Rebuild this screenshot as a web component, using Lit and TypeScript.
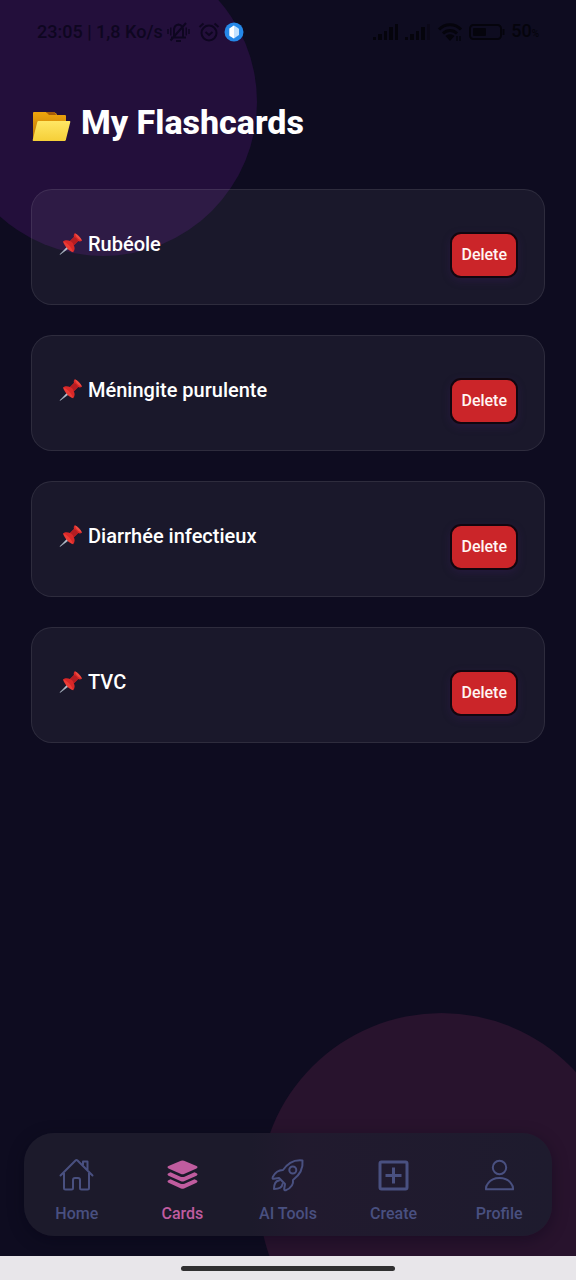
import { LitElement, html, css, svg } from "lit";
import { customElement, property, state } from "lit/decorators.js";
import { classMap } from "lit/directives/class-map.js";

const font = css`"Roboto", "Noto Sans", sans-serif`;

@customElement("status-bar")
class StatusBar extends LitElement {
  static styles = css`
    :host { display: flex; justify-content: space-between; align-items: center; height: 64px; padding: 0 37px; box-sizing: border-box; color: #0e0620; font: 500 18px/24px ${font}; }
    .group { display: flex; align-items: center; gap: 4px; }
    .right { color: #05040c; gap: 6px; }
    .small { font-size: 10px; }
    svg { display: block; fill: none; stroke: currentColor; stroke-width: 2; }
    .wide { margin-right: 4px; }
  `;

  private bars(last: number) {
    return svg`<g stroke="none" fill="currentColor">
      <rect x="0" y="14" width="3" height="3"/><rect x="5" y="11" width="4" height="6"/>
      <rect x="11" y="8" width="3" height="9"/><rect x="16" y="4" width="4" height="13"/>
      <rect x="22" y="1" width="3" height="16" opacity=${last}/></g>`;
  }

  render() {
    return html`
      <div class="group">
        <span>23:05 | 1,8 Ko/s</span>
        <svg class="wide" width="23" height="22" viewBox="0 0 23 22">
          <path d="M4 16.500h15M7 16V9.500q0-5.500 4.500-6 4.500.5 4.500 6V16M9 20h5M3.500 19.500 19 2" /><path d="M1 8v5M22 8v5M3.800 6.500v8M19.200 6.500v8" stroke-width="1.400" />
        </svg>
        <svg width="22" height="22" viewBox="0 0 22 22">
          <circle cx="11" cy="12" r="7.500" /><path d="m1.500 6 4-3.500M20.500 6l-4-3.500M7.500 11l3.500 3 3.500-3" />
        </svg>
        <svg width="20" height="20" viewBox="4 0 20 20">
          <circle cx="14" cy="10" r="9.500" fill="#2588e8" stroke="none" />
          <path d="m14 3.500 4 2.500 1 1v6l-3 2-2 1.500L9.500 14V6.500z" fill="#c3e2ff" stroke="none" />
          <path d="M14 3.500v13L9.500 13.500v-7z" fill="#fff" stroke="none" />
        </svg>
      </div>
      <div class="group right">
        <svg width="26" height="18" viewBox="0 0 26 18">${this.bars(1)}</svg>
        <svg width="26" height="18" viewBox="0 0 26 18">${this.bars(0.35)}</svg>
        <svg width="26" height="20" viewBox="0 0 26 20">
          <path stroke-width="3" d="M2 7.500c6-6.500 16-6.500 22 0M6 11.500c4-4 10-4 14 0" /><path d="m8.500 14 4.500 5 4.500-5c-2.500-2.500-6.500-2.500-9 0z" fill="currentColor" stroke="none" /><path d="M20 19v-5M23 14v5" stroke-width="1.500" />
        </svg>
        <svg width="36" height="18" viewBox="0 0 36 18">
          <rect x="1" y="2" width="31" height="14" rx="3.500" /><rect x="4" y="5" width="13" height="8" rx="1" fill="currentColor" stroke="none" /><path d="M34.500 6v6" />
        </svg>
        <span>50<span class="small">%</span></span>
      </div>
    `;
  }
}

@customElement("deck-card")
class DeckCard extends LitElement {
  @property() name = "";

  static styles = css`
    :host { display: flex; align-items: flex-start; justify-content: space-between; box-sizing: border-box; padding: 42px 26px 26px 27px; border: 1px solid rgba(255, 255, 255, 0.09); border-radius: 21px; background: rgba(255, 255, 255, 0.05); font-family: ${font}; }
    .name { display: flex; align-items: center; gap: 5px; margin: 0; color: #fff; font-size: 20px; font-weight: 500; line-height: 24px; }
    .delete { box-sizing: border-box; height: 46px; padding: 0 9px; border: 2px solid #12060f; border-radius: 11px; background: #cb2529; color: #fff5f3; font: 500 16px/24px ${font}; cursor: pointer; box-shadow: 0 3px 8px rgba(70, 30, 110, 0.25); }
    svg { display: block; }
  `;

  render() {
    return html`
      <h2 class="name">
        <svg width="24" height="24" viewBox="0 0 24 24" aria-hidden="true">
          <path d="M1 22.500 9 14l1.500 1.500z" fill="#b9c3cf" stroke="#aab5c2" stroke-width=".6" />
          <path d="M4 9.500c2-2 5-1.500 7-.5l4-4c-.5-1.500-.3-3 .8-3.800L23 8.500c-1 1.200-2.500 1.200-4 .6l-4.200 4.200c1.200 2.200 1.200 5-.6 7z" fill="#d92828" />
          <path d="M15 5c2 .5 4 2.500 4.200 4.200l-4.400 4.300C14.500 11.500 13 9.500 11 9z" fill="#b51d22" />
          <path d="M15.800 1.200C18.500 2.200 21.500 5 23 8.500c-2.800-.3-6.500-4-7.200-7.300z" fill="#ef4a40" />
          <path d="M4 9.500c4 1 8.500 5.500 10.200 10.800C10 19 5.500 14.500 4 9.500z" fill="#ec3b35" />
        </svg>
        <span>${this.name}</span>
      </h2>
      <button class="delete" type="button" @click=${() => this.dispatchEvent(new CustomEvent("remove"))}>Delete</button>
    `;
  }
}

const icons: Record<string, unknown> = {
  Home: svg`<path d="M5 15v15q0 1.500 1.500 1.500h6q1.500 0 1.500-1.500v-8q0-2 2-2h3q2 0 2 2v8q0 1.500 1.500 1.500h6q1.500 0 1.500-1.500V15M1.500 17.500 16.500 2.500q1-1 2 0l15 15M24 7V3.500h4.500v9"/>`,
  Cards: svg`<g fill="currentColor" stroke="none"><path d="M16 2.800q1.500-.6 3 0L31.500 8q2 1.200 0 2.500L19 16q-1.500.6-3 0L3.500 10.500q-2-1.300 0-2.500z"/><path d="m5.500 14.300 10 4.400q2 .8 4 0l10-4.400 2 1q2 1.200 0 2.500L19 23.300q-1.500.6-3 0L3.500 17.800q-2-1.300 0-2.500z"/><path d="m5.500 21.300 10 4.400q2 .8 4 0l10-4.400 2 1q2 1.200 0 2.500L19 30.500q-1.500.6-3 0L3.500 24.800q-2-1.300 0-2.500z"/></g>`,
  "AI Tools": svg`<path d="M32.500 2.500C22 1.500 17 6.500 13 12 8.500 12 5 14.500 2.800 19q-.8 2 1 1.800L9 20l6 6-.8 5q0 1.800 1.800 1.200 8-3.700 7-10.200C29 17.500 33.500 12 32.500 2.500z"/><circle cx="22.800" cy="12" r="3.500"/><path d="M9 22.500C5 23 4 26 4 31c5 0 8-1 8.500-5"/>`,
  Create: svg`<rect x="4" y="4" width="27" height="27" rx="1.500" stroke-width="3"/><path stroke-width="3" stroke-linecap="butt" d="M17.500 9.500v16M9.500 17.500h16"/>`,
  Profile: svg`<circle cx="17.500" cy="9.500" r="6.700"/><path d="M4 31.300h27q.3-3.300-2-6c-5-7-18-7-23 0q-2.300 2.700-2 6z"/>`,
};

@customElement("tab-bar")
class TabBar extends LitElement {
  @state() private active = "Cards";

  static styles = css`
    :host { display: block; font-family: ${font}; }
    .bar { display: grid; grid-template-columns: repeat(5, 1fr); padding: 25px 0 9px; border-radius: 30px; background: linear-gradient(90deg, #1c1a2b 43%, #211a2e 52%, #1e1b2e); box-shadow: 0 4px 16px rgba(5, 4, 20, 0.35); }
    .tab { display: flex; flex-direction: column; align-items: center; gap: 8px; color: #495080; font-size: 16px; font-weight: 500; line-height: 26px; text-decoration: none; }
    .active { color: #c05c9f; }
    svg { display: block; fill: none; stroke: currentColor; stroke-width: 2; stroke-linecap: round; stroke-linejoin: round; }
  `;

  render() {
    return html`<nav class="bar">
      ${Object.keys(icons).map(
        (name) => html`<a href="#" class=${classMap({ tab: true, active: name === this.active })}
          @click=${(e: Event) => { e.preventDefault(); this.active = name; }}>
          <svg width="35" height="35" viewBox="0 0 35 35" aria-hidden="true">${icons[name]}</svg>
          <span>${name}</span>
        </a>`
      )}
    </nav>`;
  }
}

@customElement("app-root")
class AppRoot extends LitElement {
  @state() private decks = ["Rubéole", "Méningite purulente", "Diarrhée infectieux", "TVC"];

  static styles = css`
    :host { display: block; font-family: ${font}; }
    .page { position: relative; z-index: 0; overflow: hidden; display: flex; flex-direction: column; min-height: 100vh; background: #0e0c20; }
    .orb { position: absolute; z-index: -1; border-radius: 50%; }
    .violet { top: -52px; left: -51px; width: 308px; height: 308px; background: #230f3b; }
    .pink { right: -48px; bottom: -98px; width: 365px; height: 365px; background: #28132d; }
    .main { flex: 1; padding: 34px 31px; }
    .title { display: flex; align-items: center; gap: 10px; margin: 0 0 43px; color: #fff; font-size: 34px; font-weight: 800; line-height: 48px; }
    .list { display: flex; flex-direction: column; gap: 30px; }
    .tabs { margin: 0 24px 20px; }
    .system { display: flex; align-items: center; justify-content: center; height: 24px; background: #e8e6ea; }
    .handle { width: 37%; height: 5px; border-radius: 3px; background: #303031; }
    svg { display: block; }
  `;

  render() {
    return html`<div class="page">
      <div class="orb violet"></div>
      <div class="orb pink"></div>
      <status-bar></status-bar>
      <main class="main">
        <h1 class="title">
          <svg width="40" height="38" viewBox="0 -2 40 38" aria-hidden="true">
            <defs>
              <linearGradient id="back" x2="0" y2="1"><stop stop-color="#f0a50c" /><stop offset="1" stop-color="#b97508" /></linearGradient>
              <linearGradient id="front" x2="0" y2="1"><stop stop-color="#ffe765" /><stop offset="1" stop-color="#f5cf38" /></linearGradient>
            </defs>
            <g transform="translate(0 3)">
              <path d="M2 5q0-1 1-1h12l2 1h8l1 2h8q1 0 1 1v24H2z" fill="url(#back)" />
              <path d="M15 4h9l1 3h-7z" fill="#a85c08" />
              <path d="M7.500 13h31q1 0 .8 1l-4.500 18q-.2 1-1.200 1H2.500q-1 0-.8-1l4.600-18q.2-1 1.200-1z" fill="url(#front)" />
            </g>
          </svg>
          <span>My Flashcards</span>
        </h1>
        <div class="list">
          ${this.decks.map(
            (name) => html`<deck-card .name=${name} @remove=${() => { this.decks = this.decks.filter((d) => d !== name); }}></deck-card>`
          )}
        </div>
      </main>
      <tab-bar class="tabs"></tab-bar>
      <div class="system"><div class="handle"></div></div>
    </div>`;
  }
}
